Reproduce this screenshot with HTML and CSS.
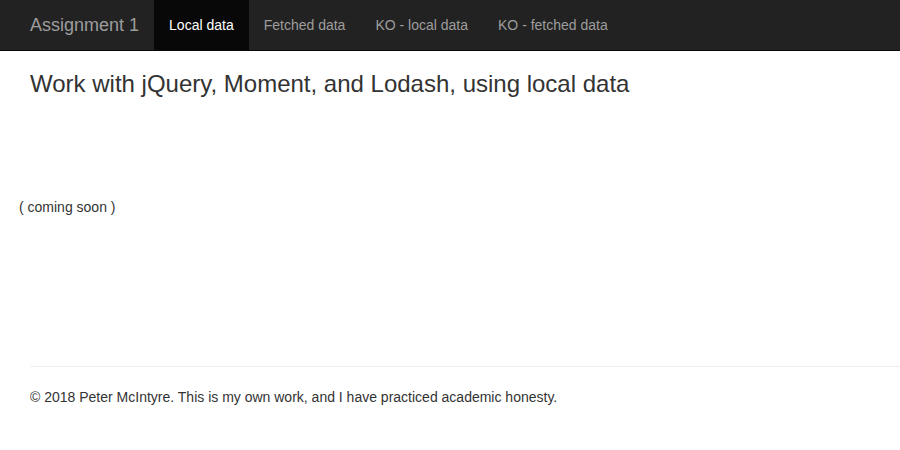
FILE: index.html
```html
<!DOCTYPE html>
<html>
<head>
<meta charset="utf-8">
<title>Assignment 1</title>
<link rel="stylesheet" href="styles.css">
</head>
<body>
<nav class="navbar">
  <a class="brand" href="#">Assignment 1</a>
  <ul class="nav">
    <li><a class="active" href="#">Local data</a></li>
    <li><a href="#">Fetched data</a></li>
    <li><a href="#">KO - local data</a></li>
    <li><a href="#">KO - fetched data</a></li>
  </ul>
</nav>
<main class="content">
  <h3 class="title">Work with jQuery, Moment, and Lodash, using local data</h3>
  <p class="soon">( coming soon )</p>
  <hr class="rule">
  <footer class="footer">
    <p>&copy; 2018 Peter McIntyre. This is my own work, and I have practiced academic honesty.</p>
  </footer>
</main>
</body>
</html>
```
FILE: styles.css
```css
* { box-sizing: border-box; }
html, body {
  margin: 0;
  padding: 0;
  background: #fff;
  font-family: "Liberation Sans", Arial, sans-serif;
  font-size: 14px;
  line-height: 20px;
  color: #333;
}
.navbar {
  display: flex;
  align-items: stretch;
  height: 51px;
  background: #222;
  border-bottom: 1px solid #080808;
  padding-left: 15px;
}
.brand {
  display: block;
  padding: 15px;
  font-size: 18px;
  line-height: 20px;
  color: #9d9d9d;
  text-decoration: none;
  height: 50px;
}
.nav {
  display: flex;
  list-style: none;
  margin: 0;
  padding: 0;
}
.nav a {
  display: block;
  padding: 15px;
  height: 50px;
  line-height: 20px;
  color: #9d9d9d;
  text-decoration: none;
}
.nav a.active {
  background: #080808;
  color: #fff;
}
.content {
  padding: 0 0 0 30px;
}
.title {
  margin: 20px 0 0 0;
  font-size: 24px;
  font-weight: 500;
  line-height: 26.4px;
}
.soon {
  margin: 100px 0 0 -11px;
}
.rule {
  margin: 149px 0 20px 0;
  border: 0;
  border-top: 1px solid #eee;
  height: 0;
}
.footer p {
  margin: 0;
}
```
